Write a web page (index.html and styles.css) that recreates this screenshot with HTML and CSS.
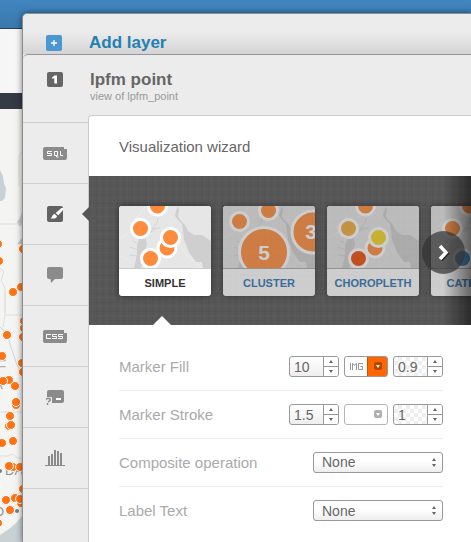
FILE: index.html
```html
<!DOCTYPE html>
<html lang="en">
<head>
<meta charset="utf-8">
<title>lpfm point</title>
<link rel="stylesheet" href="styles.css">
</head>
<body>
<svg width="0" height="0" class="defs" aria-hidden="true">
  <defs>
    <g id="terrain">
      <rect width="92" height="62" fill="#e6e6e6"/>
      <path d="M0 33l12 -8 8 -16 6 -9M0 50l10 4M58 34l10 16 16 12" fill="none" stroke="#ececec"/>
      <path d="M59 0l-2 5 -1 5 3 4 4 4 1 6 1 10 5 12 7 10 6 0 1 6h8V35l-9 -6 -8 0 -6 -4 -3 -6 -5 -5 -2 -4 1 -6z" fill="#cfcfcf"/>
      <path d="M15 62l2 -8 1 -8 0 -6 2 -7 7 0 1 6 -3 7 0 6 -3 10z" fill="#d0d0d0"/>
      <path d="M25 34l4 -6 4 -5 5 -6 1 -5M29 28l7 -5M33 23l8 -1M14 35l6 4M11 41l8 3M11 49l8 1M17 29l4 5" fill="none" stroke="#d4d4d4"/>
    </g>
  </defs>
</svg>

<div class="backdrop" aria-hidden="true">
  <div class="topbar"></div>
  <div class="subbar"></div>
  <div class="darkbar"></div>
  <svg class="map" width="24" height="433" viewBox="0 109 24 433">
    <rect y="109" width="24" height="433" fill="#f4f4f2"/>
    <path d="M0 170l3 6 1 8 2 4 -1 10 -3 3H0z" fill="#c9d1d5"/>
    <path d="M22 212l-2 6 -3 4 2 4 3 -1zM22 238l-5 6h5z" fill="#c5cdd2"/>
    <path d="M0 542v-7l9 -6 7 -6 8 -9v28z" fill="#c9d1d5"/>
    <path d="M0 224h24" stroke="#e6d9d7"/>
    <path d="M24 150l-5 6v30M0 268l4 4 -3 8 4 8v24M5 291v24h19M5 315l-2 12M0 412h24M0 456l8 0 4 -2 6 4h6" fill="none" stroke="#dedede"/>
    <path d="M0 327l8 7 2 11 3 8 4 12 4 6" fill="none" stroke="#c3d6e6"/>
    <g class="maptext"><text x="-4" y="372">F</text><text x="-6" y="389" class="small">A</text><text x="5" y="475" class="small">DA</text><text x="-6" y="516" class="small">O</text></g>
    <circle cx="0" cy="471" r="2" fill="#73808c"/><circle cx="17" cy="511" r="2" fill="#73808c"/>
    <g fill="#ff7314" stroke="#fff">
      <circle cx="-2" cy="244" r="4.500"/><circle cx="-1" cy="261" r="4.500"/><circle cx="23" cy="249" r="4.500"/><circle cx="21" cy="287" r="4.500"/><circle cx="13" cy="292" r="4.500"/>
      <circle cx="24" cy="321" r="4.500"/><circle cx="24" cy="328" r="4.500"/><circle cx="7" cy="335" r="4.500"/><circle cx="23" cy="337" r="4.500"/><circle cx="2" cy="356" r="4.500"/><circle cx="22" cy="363" r="4.500"/>
      <circle cx="23" cy="372" r="4.500"/><circle cx="9" cy="380" r="4.500"/><circle cx="3" cy="381" r="4.500"/><circle cx="15" cy="386" r="4.500"/><circle cx="16" cy="405" r="4.500"/><circle cx="16" cy="402" r="4.500"/>
      <circle cx="10" cy="416" r="4.500"/><circle cx="9" cy="426" r="4.500"/><circle cx="11" cy="425" r="4.500"/><circle cx="2" cy="443" r="4.500"/><circle cx="13" cy="441" r="4.500"/>
      <circle cx="13" cy="467" r="4.500"/><circle cx="9" cy="466" r="4.500"/><circle cx="20" cy="467" r="4.500"/><circle cx="23" cy="489" r="4.500"/><circle cx="-4" cy="487" r="4.500"/>
      <circle cx="15" cy="498" r="4.500"/><circle cx="6" cy="500" r="4.500"/><circle cx="21" cy="503" r="4.500"/><circle cx="20" cy="499" r="4.500"/><circle cx="10" cy="510" r="4.500"/><circle cx="-2" cy="523" r="4.500"/>
    </g>
  </svg>
</div>

<main class="layers">
  <a class="add-layer" href="#add">
    <svg width="16" height="16" viewBox="0 0 16 16"><rect width="16" height="16" rx="2" fill="#4a97d2"/><path d="M8 5v6M5 8h6" stroke="#fff" stroke-width="1.3"/></svg>
    <span>Add layer</span>
  </a>

  <section class="layer">
    <nav class="rail">
      <button class="tab first" aria-label="Layer 1"><svg width="16" height="15"><rect width="16" height="15" rx="2" fill="#666"/><path d="M5 5.500l2.500 -2H10V11.500H7.300V6.500H5z" fill="#fff"/></svg></button>
      <button class="tab" aria-label="SQL"><svg width="24" height="13" viewBox="0 0 24 13"><path d="M2 0H21V2H24V11q0 2 -2 2H2q-2 0 -2 -2V2q0 -2 2 -2z" fill="#8b8b8b"/><path d="M9 4.500H4.500V6.500H8.500V8.500H4M11.500 4.500h3v4h-3zM13.500 8v2h2M17.500 4v4.500H20" fill="none" stroke="#fff"/></svg></button>
      <button class="tab active" aria-label="Visualization wizard"><svg width="16" height="16" viewBox="0 0 16 16"><rect width="16" height="16" rx="2" fill="#626262"/><path d="M16 2v2L11.300 9.300 8.700 7 14.500 2zM7.700 8l2.300 2c-.2 2.300-2.500 3-6.500 2.400 1.700-.5 1.400-3.800 4.200-4.400z" fill="#fff"/></svg></button>
      <button class="tab" aria-label="Infowindow"><svg width="16" height="16" viewBox="0 0 16 16"><path d="M2 0h12q2 0 2 2v8q0 2 -2 2H8L4 16 3.500 12H2q-2 0 -2 -2V2q0 -2 2 -2z" fill="#8b8b8b"/></svg></button>
      <button class="tab" aria-label="CSS"><svg width="24" height="13" viewBox="0 0 24 13"><path d="M2 0H21V3H24V11q0 2 -2 2H2q-2 0 -2 -2V2q0 -2 2 -2z" fill="#8b8b8b"/><path d="M8 4.500H3.500V8.500H8M14 4.500H9.500V6.500H13.500V8.500H9M20 4.500H15.500V6.500H19.500V8.500H15" fill="none" stroke="#fff"/></svg></button>
      <button class="tab" aria-label="Legend"><svg width="18" height="15" viewBox="0 0 18 15"><path d="M3 0h13q2 0 2 2v9q0 2 -2 2H6V7H1V2q0 -2 2 -2z" fill="#8b8b8b"/><path d="M10 9h5" stroke="#fff" stroke-width="2"/><path d="M0 9.500l1 -1h3v2L2 12M1.500 13v2" fill="none" stroke="#8b8b8b" stroke-width="1.500"/></svg></button>
      <button class="tab" aria-label="Filters"><svg width="20" height="16" viewBox="0 0 20 16"><path d="M0 15h20v1H0zM3 6h2v9H3zM6 4h2v11H6zM9 0h2v15H9zM12 1h2v14h-2zM15 3h2v12h-2z" fill="#8b8b8b"/></svg></button>
    </nav>

    <div class="content">
      <header class="head"><h1>lpfm point</h1><p>view of lpfm_point</p></header>
      <div class="panel">
        <h2>Visualization wizard</h2>
        <div class="gallery">
          <div class="cards">
            <button class="card selected">
              <svg width="92" height="62"><use href="#terrain"/><g fill="#ff8c3c" stroke="#fff" stroke-width="3"><circle cx="38.500" cy="0" r="9"/><circle cx="48" cy="42" r="9"/><circle cx="21.500" cy="22.500" r="9"/><circle cx="51.500" cy="31.500" r="9"/><circle cx="31.500" cy="52.500" r="9"/></g></svg>
              <span>SIMPLE</span>
            </button>
            <button class="card">
              <svg width="92" height="62"><use href="#terrain"/><g fill="#ff8c3c" stroke="#fff" stroke-width="3"><circle cx="45.500" cy="4.500" r="9"/><circle cx="16.500" cy="15.500" r="9"/><circle cx="90" cy="26" r="21"/><circle cx="41" cy="46" r="24.500"/></g><g class="count"><text x="41" y="54">5</text><text x="88" y="33">3</text></g></svg>
              <span>CLUSTER</span>
            </button>
            <button class="card">
              <svg width="92" height="62"><use href="#terrain"/><g fill="#ff8c3c" stroke="#fff" stroke-width="3"><circle cx="38.500" cy="0" r="9"/><circle cx="48" cy="42" r="9"/><circle cx="21.500" cy="22.500" r="9" fill="#f3ac3d"/><circle cx="51.500" cy="31.500" r="9" fill="#f5d725"/><circle cx="31.500" cy="52.500" r="9" fill="#ee4e0a"/></g></svg>
              <span>CHOROPLETH</span>
            </button>
            <button class="card">
              <svg width="92" height="62"><use href="#terrain"/><g fill="#ff8c3c" stroke="#fff" stroke-width="3"><circle cx="38.500" cy="0" r="9"/><circle cx="21.500" cy="22.500" r="9"/><circle cx="51.500" cy="31.500" r="9"/><circle cx="31.500" cy="52.500" r="9" fill="#3a88c8"/></g></svg>
              <span>CATEGORY</span>
            </button>
          </div>
          <button class="next" aria-label="Next"><svg width="12" height="17" viewBox="0 0 12 17"><path d="M3 3l6 6.500 -6 6.500" fill="none" stroke="#222" stroke-width="3.500"/><path d="M2 2l6 6.500 -6 6.500" fill="none" stroke="#fff" stroke-width="3.500"/></svg></button>
        </div>

        <form class="form">
          <div class="row">
            <label for="fill-size">Marker Fill</label>
            <div class="controls">
              <div class="spinner"><input id="fill-size" value="10"><button type="button" aria-label="Increase"><i class="up"></i></button><button type="button" aria-label="Decrease"><i class="down"></i></button></div>
              <button type="button" class="color image" aria-label="Fill image">
                <svg width="22" height="19" viewBox="0 0 22 19"><path d="M5.500 6v7M7.500 13V6.500h.5l1.500 2 1.500 -2h.5V13M18 6.500h-4.500v6H17.500V9.500H15.500" fill="none" stroke="#999"/></svg>
                <span class="drop"><i class="down"></i></span>
              </button>
              <div class="spinner alpha"><input aria-label="Fill opacity" value="0.9"><button type="button" aria-label="Increase"><i class="up"></i></button><button type="button" aria-label="Decrease"><i class="down"></i></button></div>
            </div>
          </div>
          <div class="row">
            <label for="stroke-size">Marker Stroke</label>
            <div class="controls">
              <div class="spinner"><input id="stroke-size" value="1.5"><button type="button" aria-label="Increase"><i class="up"></i></button><button type="button" aria-label="Decrease"><i class="down"></i></button></div>
              <button type="button" class="color" aria-label="Stroke color"><span class="drop"><i class="down"></i></span></button>
              <div class="spinner alpha"><input aria-label="Stroke opacity" value="1"><button type="button" aria-label="Increase"><i class="up"></i></button><button type="button" aria-label="Decrease"><i class="down"></i></button></div>
            </div>
          </div>
          <div class="row">
            <label for="operation">Composite operation</label>
            <div class="pick"><select id="operation"><option>None</option></select><span><i class="up"></i><i class="down"></i></span></div>
          </div>
          <div class="row">
            <label for="text">Label Text</label>
            <div class="pick"><select id="text"><option>None</option></select><span><i class="up"></i><i class="down"></i></span></div>
          </div>
        </form>
      </div>
    </div>
  </section>
</main>
</body>
</html>
```
FILE: styles.css
```css
* { box-sizing: border-box; }
html, body { height: 100%; }
body {
  margin: 0;
  overflow: hidden;
  font-family: "Liberation Sans", Arial, sans-serif;
  background: #f4f4f2;
}
button, input, select { font: inherit; margin: 0; padding: 0; border: 0; background: none; border-radius: 0; }
button { cursor: pointer; }
h1, h2, p { margin: 0; }
svg { display: block; }
.defs { position: absolute; }

/* Page behind the layer sheets */
.backdrop { position: absolute; inset: 0; overflow: hidden; }
.topbar { height: 29px; background: linear-gradient(#4186bf, #3a78ae); border-bottom: 1px solid #2b3f50; }
.subbar { height: 64px; background: #f6f6f6; }
.darkbar { height: 16px; background: #343b44; }
.maptext { font-size: 17px; fill: #b0b0b0; }
.maptext .small { font-size: 13px; fill: #8b949c; }

.layers {
  position: relative;
  display: flex;
  flex-direction: column;
  min-height: calc(100% - 13px);
  margin: 13px 0 0 22px;
  border-top: 1px solid #8b8f92;
  border-left: 1px solid #8a8a8a;
  border-radius: 5px 0 0 0;
  background: #ececec;
  box-shadow: 0 0 6px rgba(0, 0, 0, .5);
}
.add-layer {
  display: flex;
  align-items: center;
  gap: 27px;
  height: 40px;
  padding: 18px 0 0 23px;
  border-radius: 5px 0 0 0;
  background: linear-gradient(#ececec 45%, #d4d4d4);
  color: #2380b2;
  font-size: 17px;
  font-weight: bold;
  text-decoration: none;
}
.layer {
  flex: 1;
  display: grid;
  grid-template-columns: 65px minmax(0, 1fr);
  border-top: 1px solid #969696;
  border-radius: 5px 0 0 0;
  background: #ececec;
}
.tab {
  position: relative;
  display: flex;
  align-items: center;
  justify-content: center;
  width: 100%;
  height: 61px;
  padding-right: 2px;
  border-bottom: 1px solid #d0d0d0;
}
.tab.first { height: 68px; padding-bottom: 18px; }
.tab.active::after {
  content: "";
  position: absolute;
  right: -1px;
  border: 7px solid transparent;
  border-left: 0;
  border-right-color: #555;
  z-index: 1;
}

.content { display: flex; flex-direction: column; }
.head { height: 60px; padding: 15px 0 0 2px; color: #666; }
.head h1 { font-size: 17px; line-height: 20px; }
.head p { font-size: 11px; line-height: 13px; color: #999; }
.panel {
  flex: 1;
  border: 1px solid #ccc;
  border-right: 0;
  border-bottom: 0;
  border-radius: 4px 0 0 0;
  background: #fff;
}
.panel h2 { padding: 2px 30px 0; font-size: 15px; font-weight: normal; line-height: 58px; color: #666; }

.gallery {
  position: relative;
  height: 149px;
  padding: 30px;
  overflow: hidden;
  background:
    repeating-linear-gradient(90deg, rgba(0, 0, 0, .03) 0 1px, transparent 1px 3px, rgba(255, 255, 255, .02) 3px 4px, transparent 4px 7px),
    repeating-linear-gradient(rgba(0, 0, 0, .03) 0 1px, transparent 1px 4px, rgba(255, 255, 255, .02) 4px 5px, transparent 5px 9px),
    #575757;
}
.gallery::before {
  content: "";
  position: absolute;
  left: 64px;
  bottom: 0;
  border: 9px solid transparent;
  border-top: 0;
  border-bottom-color: #fff;
}
.gallery::after {
  content: "";
  position: absolute;
  inset: 0 0 0 auto;
  width: 28px;
  background: linear-gradient(90deg, transparent, rgba(0, 0, 0, .5));
}
.cards { display: flex; gap: 12px; }
.card {
  flex: none;
  width: 92px;
  height: 90px;
  overflow: hidden;
  border-radius: 3px;
  background: #fff;
  opacity: .7;
  box-shadow: 0 0 6px rgba(0, 0, 0, .5);
  color: #2f76b5;
  font-size: 11px;
  font-weight: bold;
}
.card.selected { opacity: 1; color: #333; }
.card span { display: block; border-top: 1px solid #ccc; line-height: 28px; }
.card:not(.selected) span { border-color: #aaa; }
.count { font-size: 21px; font-weight: bold; fill: #fff; text-anchor: middle; }
.next {
  position: absolute;
  z-index: 1;
  right: 6px;
  top: 55px;
  display: grid;
  place-items: center;
  width: 43px;
  height: 43px;
  border-radius: 50%;
  background: rgba(50, 50, 50, .7);
}

.form { padding: 18px 28px 0 30px; }
.row {
  display: flex;
  align-items: center;
  justify-content: space-between;
  height: 48px;
  padding-bottom: 1px;
  border-bottom: 1px solid #eee;
  font-size: 15px;
  color: #aaa;
}
.row:last-child { border-bottom: 0; }
.controls { display: flex; gap: 5px; }
.spinner, .color, .pick {
  height: 21px;
  border: 1px solid #999;
  border-radius: 3px;
  overflow: hidden;
}
.spinner {
  display: grid;
  grid-template: 1fr 1fr / 1fr 15px;
  width: 50px;
  background: linear-gradient(#fff, #eee);
}
.spinner input {
  grid-row: span 2;
  width: 100%;
  padding: 1px 0 0 4px;
  color: #666;
  font-size: 14px;
  outline: 0;
}
.spinner button {
  display: grid;
  place-items: center;
  border-left: 1px solid #999;
  background: #fff;
}
.spinner button + button { border-top: 1px solid #999; }
.spinner.alpha { background: repeating-conic-gradient(#eee 0 25%, #fff 0 50%) 0 0 / 8px 8px; }
.up, .down { display: block; border: 2px solid transparent; }
.up { border-top: 0; border-bottom: 3px solid #666; }
.down { border-bottom: 0; border-top: 3px solid #666; }
.color {
  display: flex;
  align-items: center;
  justify-content: flex-end;
  width: 44px;
  padding-right: 5px;
  border-color: #b5b5b5;
  background: #fff;
}
.drop {
  display: grid;
  place-items: center;
  width: 8px;
  height: 8px;
  border-radius: 2px;
  background: #b0b0b0;
}
.drop .down { border-top-color: #fff; }
.color.image {
  justify-content: space-between;
  border-color: #999;
  background: linear-gradient(90deg, #fff 22px, #c95300 22px 23px, #ff6600 23px);
}
.image .drop { background: #b34700; }
.pick {
  position: relative;
  width: 130px;
  background: linear-gradient(#fff 40%, #eee);
}
.pick select {
  display: block;
  width: 100%;
  height: 19px;
  padding-left: 8px;
  appearance: none;
  color: #666;
  font-size: 14px;
  outline: 0;
}
.pick span {
  position: absolute;
  right: 6px;
  top: 5px;
  display: grid;
  gap: 3px;
  pointer-events: none;
}
```
